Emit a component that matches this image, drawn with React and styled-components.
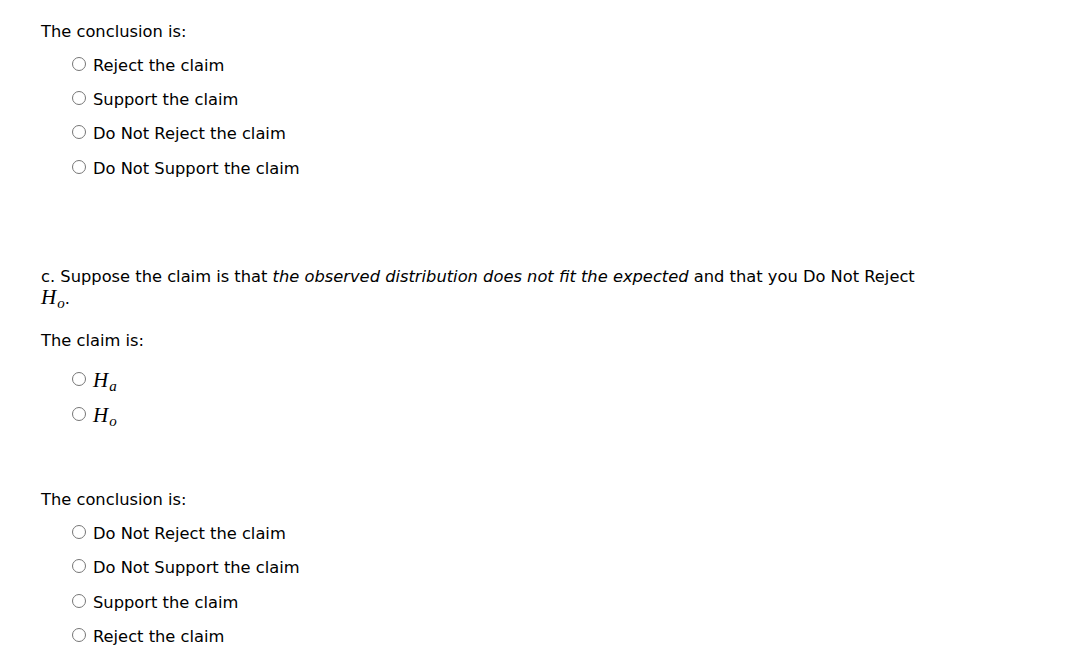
import React from 'react';
import styled, { createGlobalStyle } from 'styled-components';

const GlobalStyle = createGlobalStyle`
  body {
    margin: 0;
    background: #fff;
    color: #000;
    font-family: "DejaVu Sans", Verdana, sans-serif;
    font-size: 16.3px;
  }
`;

const Page = styled.div`
  padding: 22px 0 0 41px;
`;

const Label = styled.p`
  margin: 0;
  line-height: 20px;
`;

const Prompt = styled.p`
  margin: 81px 0 0;
  max-width: 890px;
  line-height: 20px;
`;

const OptionList = styled.div`
  display: flex;
  flex-direction: column;
  margin: ${props => props.gap}px 0 0;
  padding-left: 31px;
`;

const Option = styled.label`
  display: flex;
  align-items: center;
  height: ${props => props.rowHeight}px;
  line-height: 20px;
`;

const Radio = styled.input.attrs({ type: 'radio' })`
  width: 14px;
  height: 14px;
  margin: 0 7px 4px 0;
`;

const Math = styled.span`
  font-family: "Liberation Serif", "Times New Roman", serif;
  font-style: italic;
  font-size: 21px;
  line-height: 1;

  sub {
    font-size: 15px;
    vertical-align: -4px;
    line-height: 0;
    margin-left: 1px;
  }
`;

const Section = styled.div`
  margin-top: ${props => props.top}px;
`;

const H = ({ sub }) => (
  <Math>
    H<sub>{sub}</sub>
  </Math>
);

const Choices = ({ name, options, gap, rowHeight }) => (
  <OptionList gap={gap}>
    {options.map((opt, i) => (
      <Option key={i} rowHeight={rowHeight}>
        <Radio name={name} />
        <span>{opt}</span>
      </Option>
    ))}
  </OptionList>
);

const App = () => {
  return (
    <Page>
      <GlobalStyle />
      <Label>The conclusion is:</Label>
      <Choices
        name="b-conclusion"
        gap={7}
        rowHeight={34.2}
        options={['Reject the claim', 'Support the claim', 'Do Not Reject the claim', 'Do Not Support the claim']}
      />

      <Prompt>
        c. Suppose the claim is that <em>the observed distribution does not fit the expected</em> and that you Do Not Reject <H sub="o" />.
      </Prompt>

      <Section top={22}>
        <Label>The claim is:</Label>
        <Choices
          name="c-claim"
          gap={13}
          rowHeight={35}
          options={[<H sub="a" />, <H sub="o" />]}
        />
      </Section>

      <Section top={56}>
        <Label>The conclusion is:</Label>
        <Choices
          name="c-conclusion"
          gap={7}
          rowHeight={34.4}
          options={['Do Not Reject the claim', 'Do Not Support the claim', 'Support the claim', 'Reject the claim']}
        />
      </Section>
    </Page>
  );
};

export default App;
